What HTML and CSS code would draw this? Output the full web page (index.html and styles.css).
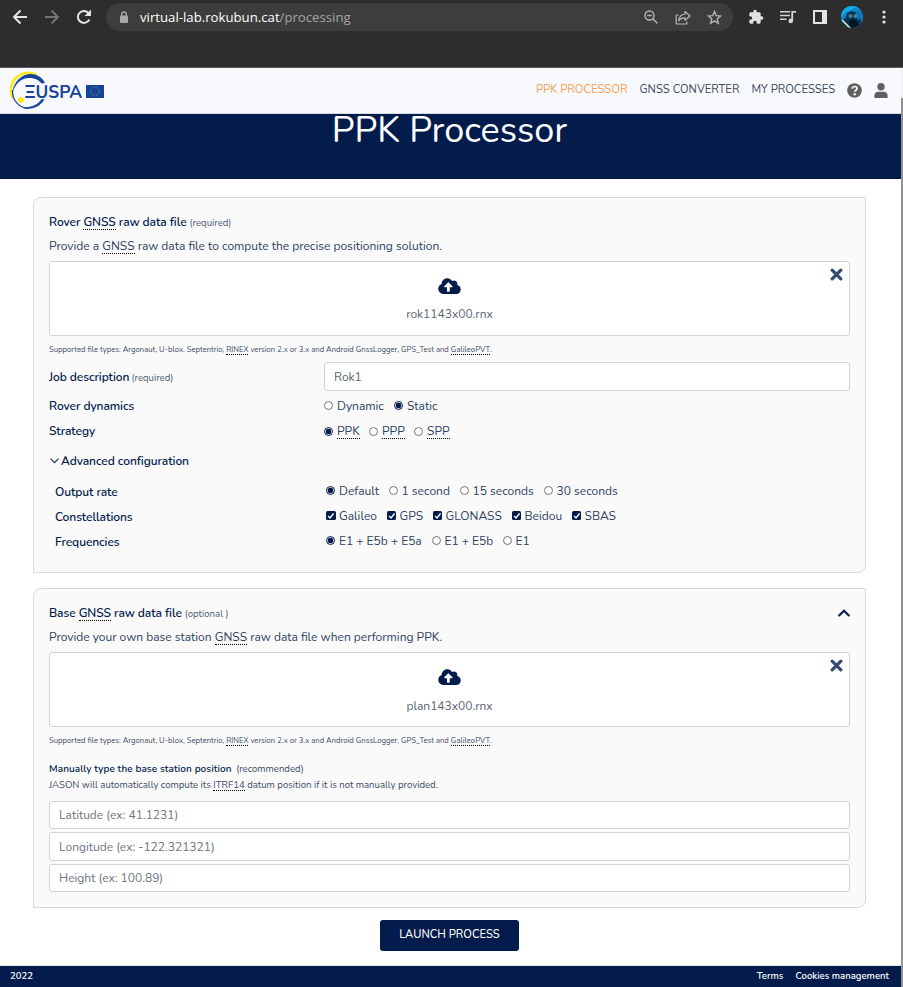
FILE: index.html
```html
<!DOCTYPE html>
<html lang="en">
<head>
<meta charset="utf-8">
<title>PPK Processor</title>
<link rel="stylesheet" href="styles.css">
</head>
<body>
<svg class="defs" width="0" height="0" aria-hidden="true">
  <symbol id="cloud" viewBox="0 0 640 512"><path fill="currentColor" d="M537.6 226.600c4.100-10.700 6.400-22.400 6.400-34.600 0-53-43-96-96-96-19.700 0-38.100 6-53.300 16.200C367 64.200 315.300 32 256 32c-88.400 0-160 71.600-160 160 0 2.700.1 5.400.2 8.100C40.200 219.800 0 273.200 0 336c0 79.500 64.500 144 144 144h368c70.700 0 128-57.300 128-128 0-61.900-44-113.600-102.400-125.400zM393.400 288H328v112c0 8.800-7.200 16-16 16h-48c-8.800 0-16-7.200-16-16V288h-65.400c-14.300 0-21.400-17.200-11.300-27.300l105.400-105.400c6.200-6.200 16.400-6.200 22.600 0l105.400 105.400c10.100 10.100 2.900 27.300-11.300 27.300z"/></symbol>
  <symbol id="cross" viewBox="0 0 12 12"><path d="M2 2l8 8M10 2l-8 8" fill="none" stroke="currentColor" stroke-width="3" stroke-linecap="round"/></symbol>
</svg>

<header class="browser">
  <div class="toolbar">
    <svg class="back" width="16" height="16" viewBox="0 0 16 16" fill="none" stroke="#e4e4e4" stroke-width="2"><path d="M15 8H2M8.500 1.500L2 8l6.500 6.500"/></svg>
    <svg class="forward" width="16" height="16" viewBox="0 0 16 16" fill="none" stroke="#747474" stroke-width="2"><path d="M1 8h13M7.500 1.500L14 8l-6.500 6.500"/></svg>
    <svg class="reload" width="16" height="16" viewBox="0 0 16 16"><path d="M13.300 10.500A6 6 0 1 1 12.300 3.800" fill="none" stroke="#e4e4e4" stroke-width="2"/><path d="M15 .5v6.500H8.500z" fill="#e4e4e4"/></svg>
    <div class="address">
      <svg class="lock" width="10" height="13" viewBox="0 0 10 13"><rect x="1" y="4.500" width="8" height="7.500" rx="1" fill="#a6a8ab"/><path d="M2.700 5V3.300a2.300 2.300 0 0 1 4.600 0V5" fill="none" stroke="#a6a8ab" stroke-width="1.300"/></svg>
      <span class="url">virtual-lab.rokubun.cat<span class="path">/processing</span></span>
      <svg class="zoom-out" width="14" height="14" viewBox="0 0 14 14" fill="none" stroke="#b4b6b8" stroke-width="1.400"><circle cx="5.500" cy="5.500" r="4.500"/><path d="M9 9l4.500 4.500M3.300 5.500h4.400"/></svg>
      <svg class="share" width="16" height="15" viewBox="0 0 16 15" fill="none" stroke="#b4b6b8" stroke-width="1.200" stroke-linejoin="round"><path d="M3.500 5H1.200v9h10.600v-2.500"/><path d="M10 1.500L15 6l-5 4.300V7.800C7 7.800 5 8.700 3.600 10.800 4 7 6 4.500 10 4z"/></svg>
      <svg class="star" width="15" height="15" viewBox="0 0 15 15" fill="none" stroke="#b4b6b8" stroke-width="1.400"><path d="M7.500 1.500l1.700 4.200 4.500.3-3.500 2.900 1.100 4.400-3.800-2.400-3.800 2.400 1.100-4.400L1.300 6l4.500-.3z"/></svg>
    </div>
    <svg class="puzzle" width="16" height="16" viewBox="0 0 24 24" fill="#e0e0e0"><path d="M20.500 11H19V7c0-1.100-.9-2-2-2h-4V3.500a2.500 2.500 0 0 0-5 0V5H4c-1.100 0-2 .9-2 2v3.800h1.500a2.700 2.700 0 0 1 0 5.400H2V20c0 1.100.9 2 2 2h3.800v-1.500a2.700 2.700 0 0 1 5.400 0V22H17c1.100 0 2-.9 2-2v-4h1.500a2.500 2.500 0 0 0 0-5z"/></svg>
    <svg class="media" width="16" height="14" viewBox="0 0 16 14" fill="#d4d4d4"><path d="M0 1h10v1.600H0zM0 4.700h10v1.600H0zM0 8.400h6.500V10H0zM11.300 1H16v1.800h-2.900v8a2.300 2.300 0 1 1-1.800-2.200z"/></svg>
    <svg class="panel" width="14" height="14" viewBox="0 0 14 14"><path d="M0 0h14v14H0zM2 2v10h7V2z" fill="#e4e4e4" fill-rule="evenodd"/></svg>
    <svg class="avatar" width="22" height="22" viewBox="0 0 22 22">
      <defs><clipPath id="round"><circle cx="11" cy="11" r="11"/></clipPath></defs>
      <g clip-path="url(#round)"><rect width="22" height="22" fill="#0b83c4"/><path d="M0 0h22v4L14 2 5 6 0 11z" fill="#12aee6"/><path d="M1 15l4-4 1-4 5-2 5 2 2 4 2 3v9H0z" fill="#0a3450"/><path d="M15 5l5 1 1 6-4 2-2-4z" fill="#0875c0"/><circle cx="9.500" cy="10" r="2" fill="#4e7f91"/><circle cx="14.500" cy="10" r="2" fill="#4e7f91"/><path d="M8 15l4-2 4 2 2 4-6 3-4-3z" fill="#061523"/><path d="M1 14l8 8" stroke="#d8f7e0" stroke-width="1.500"/></g>
    </svg>
    <svg class="dots" width="4" height="14" viewBox="0 0 4 14" fill="#e4e4e4"><circle cx="2" cy="2" r="1.600"/><circle cx="2" cy="7" r="1.600"/><circle cx="2" cy="12" r="1.600"/></svg>
  </div>
</header>

<div class="viewport">
  <div class="page">
    <nav class="navbar">
      <svg class="logo" width="96" height="40" viewBox="0 0 96 40">
        <path d="M4 27.500A17.300 17.300 0 0 1 28 4.300" fill="none" stroke="#fdea14" stroke-width="2.600"/>
        <path d="M36 12C31 2.500 19 0 10.500 7.500 6 11.500 3.500 17 3.500 22 6 13 11.500 7.300 19.500 7 25.500 6.800 30 9 32.500 12.500z" fill="#15439b"/>
        <path d="M3.600 19A16.800 16.800 0 0 0 20 37.500" fill="none" stroke="#15439b" stroke-width="1.200"/>
        <path d="M14 36.500C22 39 31 36 35 28.500H32.500C29 34.500 21 37 14 36.500z" fill="#15439b" stroke="#15439b" stroke-width=".6"/>
        <circle cx="11.800" cy="29" r="3" fill="#fdea14"/>
        <text x="15.500" y="27" textLength="57.500" lengthAdjust="spacingAndGlyphs">ΞUSPA</text>
        <rect x="77" y="14" width="18" height="13" fill="#15439b"/>
        <circle cx="86" cy="20.500" r="4.200" fill="none" stroke="#8f9a55" stroke-width="1" stroke-dasharray="1 1.200"/>
      </svg>
      <div class="links">
        <a class="active">PPK PROCESSOR</a>
        <a>GNSS CONVERTER</a>
        <a>MY PROCESSES</a>
      </div>
      <svg class="help" width="15" height="15" viewBox="0 0 15 15"><circle cx="7.500" cy="7.500" r="7.300" fill="#606060"/><path d="M5.200 5.700c.2-1.500 1.100-2.200 2.400-2.200s2.400.8 2.400 2c0 1.700-2.200 1.700-2.200 3.300" fill="none" stroke="#f8f9fc" stroke-width="1.700"/><circle cx="7.700" cy="11.200" r="1.200" fill="#f8f9fc"/></svg>
      <svg class="user" width="14" height="15" viewBox="0 0 14 15" fill="#606060"><circle cx="7" cy="3.700" r="3.700"/><path d="M.4 15v-2.500C.4 10 2 8.700 4.200 8.700h5.600c2.200 0 3.800 1.300 3.800 3.800V15z"/></svg>
    </nav>

    <section class="hero"><h1>PPK Processor</h1></section>

    <main>
      <section class="card">
        <div class="row title"><b>Rover <abbr>GNSS</abbr> raw data file</b> <small>(required)</small></div>
        <p class="row desc">Provide a <abbr>GNSS</abbr> raw data file to compute the precise positioning solution.</p>
        <div class="drop">
          <svg class="cloud"><use href="#cloud"/></svg>
          <span>rok1143x00.rnx</span>
          <svg class="cross"><use href="#cross"/></svg>
        </div>
        <p class="note">Supported file types: Argonaut, U-blox, Septentrio, <abbr>RINEX</abbr> version 2.x or 3.x and Android GnssLogger, GPS_Test and <abbr>GalileoPVT</abbr>.</p>
        <div class="field job"><div class="label"><b>Job description</b> <small>(required)</small></div><div class="input value">Rok1</div></div>
        <div class="field"><b>Rover dynamics</b>
          <div class="options dynamics"><label><i class="radio"></i>Dynamic</label><label><i class="radio on"></i>Static</label></div></div>
        <div class="field"><b>Strategy</b>
          <div class="options strategy"><label><i class="radio on"></i><abbr>PPK</abbr></label><label><i class="radio"></i><abbr>PPP</abbr></label><label><i class="radio"></i><abbr>SPP</abbr></label></div></div>
        <div class="advanced"><svg width="9" height="6" viewBox="0 0 9 6"><path d="M.5.700l4 4 4-4" fill="none" stroke="#1a3057" stroke-width="1.200"/></svg><b>Advanced configuration</b></div>
        <div class="nested">
          <div class="field"><b>Output rate</b>
            <div class="options rate"><label><i class="radio on"></i>Default</label><label><i class="radio"></i>1 second</label><label><i class="radio"></i>15 seconds</label><label><i class="radio"></i>30 seconds</label></div></div>
          <div class="field"><b>Constellations</b>
            <div class="options constellations">
              <label><svg class="check" viewBox="0 0 9 9"><path d="M2 4.700l1.800 1.800L7.200 2.400"/></svg>Galileo</label>
              <label><svg class="check" viewBox="0 0 9 9"><path d="M2 4.700l1.800 1.800L7.200 2.400"/></svg>GPS</label>
              <label><svg class="check" viewBox="0 0 9 9"><path d="M2 4.700l1.800 1.800L7.200 2.400"/></svg>GLONASS</label>
              <label><svg class="check" viewBox="0 0 9 9"><path d="M2 4.700l1.800 1.800L7.200 2.400"/></svg>Beidou</label>
              <label><svg class="check" viewBox="0 0 9 9"><path d="M2 4.700l1.800 1.800L7.200 2.400"/></svg>SBAS</label>
            </div></div>
          <div class="field"><b>Frequencies</b>
            <div class="options frequencies"><label><i class="radio on"></i>E1 + E5b + E5a</label><label><i class="radio"></i>E1 + E5b</label><label><i class="radio"></i>E1</label></div></div>
        </div>
      </section>

      <section class="card base">
        <div class="row title"><b>Base <abbr>GNSS</abbr> raw data file</b> <small>(optional )</small>
          <svg class="collapse" width="12" height="8" viewBox="0 0 12 8"><path d="M1.200 6.500L6 1.800l4.800 4.700" fill="none" stroke="#031c4c" stroke-width="2.100" stroke-linecap="round"/></svg></div>
        <p class="row desc">Provide your own base station <abbr>GNSS</abbr> raw data file when performing PPK.</p>
        <div class="drop">
          <svg class="cloud"><use href="#cloud"/></svg>
          <span>plan143x00.rnx</span>
          <svg class="cross"><use href="#cross"/></svg>
        </div>
        <p class="note">Supported file types: Argonaut, U-blox, Septentrio, <abbr>RINEX</abbr> version 2.x or 3.x and Android GnssLogger, GPS_Test and <abbr>GalileoPVT</abbr>.</p>
        <p class="manual"><b>Manually type the base station position</b> (recommended)<br>JASON will automatically compute its <abbr>ITRF14</abbr> datum position if it is not manually provided.</p>
        <div class="coords">
          <div class="input">Latitude (ex: 41.1231)</div>
          <div class="input tall">Longitude (ex: -122.321321)</div>
          <div class="input">Height (ex: 100.89)</div>
        </div>
      </section>

      <button class="launch">LAUNCH PROCESS</button>
    </main>

    <footer><span>2022</span><span class="end">Terms</span><span>Cookies management</span></footer>
  </div>
  <div class="scrollbar"><div class="thumb"></div></div>
</div>
</body>
</html>
```
FILE: styles.css
```css
* { box-sizing: border-box; }
body { margin: 0; width: 903px; height: 987px; overflow: hidden; background: #fff; color: #2d4260; font: 400 12px Nunito, Lato, sans-serif; }
p, h1 { margin: 0; }
svg { display: block; flex: none; }
.defs { position: absolute; }
b { font-weight: 600; color: #031c4c; letter-spacing: -.08px; }
abbr { border-bottom: 1px dotted #000; text-decoration: none; display: inline-block; line-height: 13px; }

.browser { height: 68px; background: #2d2d2d; border-bottom: 1px solid #5a5a5a; }
.toolbar { display: flex; align-items: center; height: 34px; padding-left: 12px; }
.forward { margin-left: 16px; }
.reload { margin-left: 16px; }
.address { display: flex; align-items: center; width: 627px; height: 28px; margin-left: 14px; padding-left: 13px; border-radius: 14px; background: #3d3d3d; }
.url { width: 504px; margin-left: 11px; font: 13.2px "Open Sans", sans-serif; color: #fff; line-height: 20px; }
.path { color: #a2a4a7; }
.share { margin-left: 17px; }
.star { margin-left: 16px; }
.puzzle { margin-left: 15px; }
.media { margin-left: 16px; }
.panel { margin-left: 17px; }
.avatar { margin-left: 14px; }
.dots { margin-left: 19px; }

.viewport { display: flex; height: 919px; }
.page { width: 901px; display: flex; flex-direction: column; }
.scrollbar { width: 2px; background: #f1f1f1; padding-top: 30px; }
.thumb { height: 889px; background: #929292; }

.navbar { display: flex; height: 46px; padding-left: 9px; background: #f8f9fc; border-bottom: 1px solid #d5dce2; }
.logo { margin-top: 3px; }
.logo text { font: 700 17.500px Nunito, sans-serif; fill: #15439b; }
.links { display: flex; gap: 12px; width: 311px; margin-left: 431px; padding-top: 13px; font-size: 11.250px; line-height: 17px; color: #3c4a5c; white-space: nowrap; }
.active { color: #f5a054; }
.help { margin-top: 15px; }
.user { margin: 15px 0 0 12px; }

.hero { height: 65px; background: #031c4c; color: #fff; text-align: center; }
h1 { margin-left: -2px; font-weight: 400; font-size: 36px; line-height: 34px; }

main { flex: 1; padding: 18px 35px 0 33px; }
.card { height: 376px; padding: 12px 15px 0; background: #fafafa; border: 1px solid #dadada; border-radius: 8px 0 8px 0; }
.base { height: 320px; margin-top: 15px; }
.row { height: 24px; line-height: 24px; }
.title { display: flex; align-items: center; gap: 3px; }
.title b, .title small { white-space: pre; }
.title small { line-height: 16px; padding-top: 1px; }
small { font-size: 9.6px; color: #4d5c72; }
.label small { margin-left: -1px; }
.collapse { margin-left: auto; }
.drop { position: relative; height: 75px; margin-top: 3px; padding-top: 15px; background: #fff; border: 1px solid #ced4da; border-radius: 3px; color: #5a6470; text-align: center; line-height: 16px; }
.cloud { width: 23px; height: 18px; margin: 0 auto 11px; color: #031c4c; }
.base .cloud { margin-bottom: 12px; }
.cross { position: absolute; top: 6px; right: 6px; width: 13px; height: 13px; color: #354c74; }
.note { height: 26px; padding-top: 4px; line-height: 20px; font-size: 7.7px; color: #3d4d64; white-space: nowrap; }
.note abbr { line-height: 9px; }

.field { display: grid; grid-template-columns: 275px 1fr; align-items: center; height: 25px; white-space: nowrap; }
.field > b { position: relative; top: -1px; }
.nested .field > b { top: 0; }
.job { height: 29px; margin-bottom: 3px; }
.input { height: 28px; padding-left: 9px; background: #fff; border: 1px solid #ced4da; border-radius: 3px; line-height: 27px; color: #6c757d; }
.value, .tall { height: 29px; line-height: 28px; }
.value { color: #5a6470; }
.options { display: grid; align-items: center; line-height: 16px; }
.options label { display: flex; align-items: center; }
.dynamics { position: relative; top: -1px; }
.radio { width: 9px; height: 9px; margin-right: 4px; border: 1px solid #767676; border-radius: 50%; background: #fff; }
.on { border-color: #031c4c; background: radial-gradient(circle, #031c4c 2.600px, #fff 3.200px); }
.check { width: 9.500px; height: 9.500px; margin-right: 3.500px; border-radius: 1.500px; background: #031c4c; fill: none; stroke: #fff; stroke-width: 1.300; }
.dynamics { grid-template-columns: 70px 70px; }
.strategy { grid-template-columns: 45px 45px 45px; }
.advanced { display: flex; align-items: center; gap: 2px; height: 25px; margin-top: 4px; padding-left: 1px; }
.nested { margin-top: 6px; padding-left: 6px; }
.nested .field { grid-template-columns: 271px 1fr; }
.nested .options { position: relative; top: -1px; }
.rate { grid-template-columns: 62.500px 71px 84px 80px; }
.constellations { grid-template-columns: 60.500px 46px 79px 60px 60px; }
.frequencies { grid-template-columns: 105.500px 71px 40px; }

.manual { margin-top: 8px; font-size: 9.600px; line-height: 15px; color: #3d4d64; }
.manual b { font-size: 10px; letter-spacing: .08px; margin-right: 2px; }
.manual abbr { line-height: 11px; }
.coords { display: flex; flex-direction: column; gap: 3px; margin-top: 9px; }
.launch { display: block; width: 139px; height: 31px; margin: 12px auto 0 347px; padding: 0 0 3px; border: 0; border-radius: 3px; background: #031c4c; color: #fff; font: 500 11.200px Nunito, Lato, sans-serif; }

footer { display: flex; height: 22px; padding: 0 12px 0 10px; gap: 12px; background: #031c4c; border-top: 1px solid #e4e4e4; color: #fff; font-weight: 600; font-size: 9.550px; line-height: 20px; }
.end { margin-left: auto; }
```
